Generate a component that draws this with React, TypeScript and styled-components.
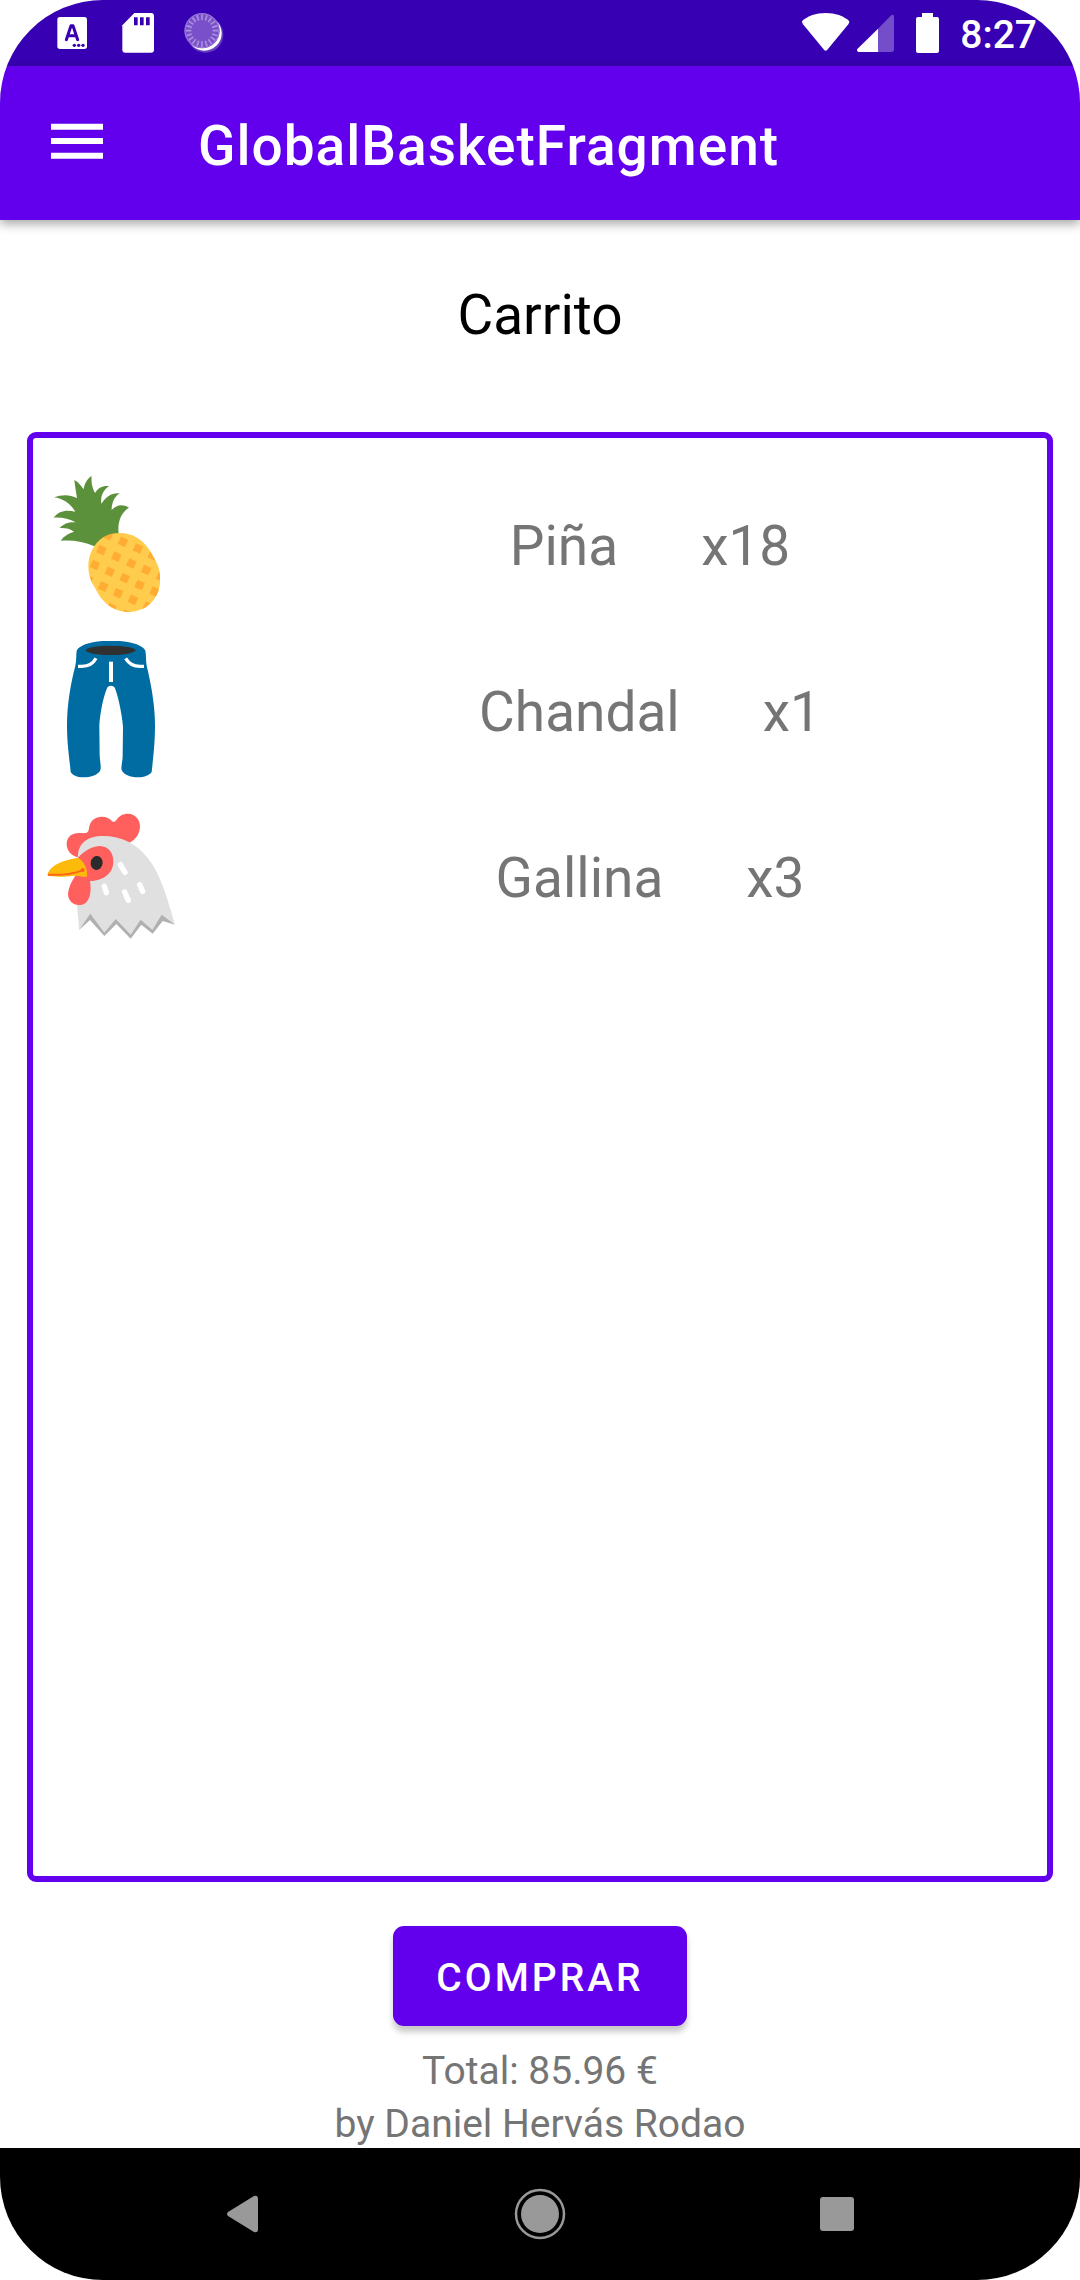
import React from 'react';
import styled, { createGlobalStyle } from 'styled-components';

const colors = {
  primary: '#6200ee',
  primaryDark: '#3700b3',
  surface: '#ffffff',
  text: '#000000',
  muted: '#757575',
  nav: '#999999',
};

const GlobalStyle = createGlobalStyle`
  *, *::before, *::after { box-sizing: border-box; }
  body {
    margin: 0;
    background: ${colors.surface};
    font-family: Roboto, 'Noto Sans', sans-serif;
  }
`;

const Screen = styled.div`
  display: flex;
  flex-direction: column;
  min-height: 100vh;
  border-radius: 103px;
  overflow: hidden;
  background: ${colors.surface};
`;

const StatusBar = styled.div`
  display: flex;
  align-items: center;
  justify-content: space-between;
  height: 66px;
  padding: 0 43px 0 52px;
  background: ${colors.primaryDark};
  color: #fff;
`;

const StatusGroup = styled.div<{ $gap: number }>`
  display: flex;
  align-items: center;
  gap: ${(p) => p.$gap}px;
`;

const StatusIcon = styled.svg<{ $width?: number }>`
  display: block;
  width: ${(p) => p.$width ?? 40}px;
  height: 40px;
`;

const Clock = styled.time`
  font-size: 39px;
  line-height: 48px;
  font-weight: 500;
  padding-top: 4px;
`;

const AppBar = styled.header`
  display: flex;
  align-items: center;
  gap: 88px;
  height: 154px;
  padding: 0 44px;
  background: ${colors.primary};
  color: #fff;
  box-shadow: 0 4px 10px rgba(0, 0, 0, 0.35);
`;

const IconButton = styled.button`
  display: flex;
  align-items: center;
  justify-content: center;
  padding: 0;
  border: 0;
  background: none;
  cursor: pointer;
`;

const MenuIcon = styled.svg`
  width: 66px;
  height: 66px;
`;

const Title = styled.h1`
  margin: 0;
  padding-top: 6px;
  font-size: 55px;
  line-height: 65px;
  font-weight: 500;
  letter-spacing: 1px;
`;

const Main = styled.main`
  flex: 1;
  display: flex;
  flex-direction: column;
  align-items: center;
  padding: 63px 27px 0;
`;

const Heading = styled.h2`
  margin: 0 0 84px;
  font-size: 55px;
  line-height: 65px;
  font-weight: 400;
  color: ${colors.text};
`;

const BasketList = styled.ul`
  flex: 1;
  align-self: stretch;
  margin: 0;
  padding: 22px 0;
  list-style: none;
  border: 6px solid ${colors.primary};
  border-radius: 9px;
`;

const BasketRow = styled.li`
  display: grid;
  grid-template-columns: 211px 1fr;
  align-items: center;
  height: 166px;
  padding-left: 9px;
`;

const Picture = styled.svg`
  display: block;
  width: 137px;
  height: 137px;
`;

const RowText = styled.div`
  display: flex;
  justify-content: center;
  gap: 83px;
  padding-top: 6px;
  font-size: 55px;
  line-height: 65px;
  color: ${colors.muted};
`;

const BuyButton = styled.button`
  margin: 44px 0 21px;
  height: 100px;
  padding: 4px 43px 0;
  border: 0;
  border-radius: 11px;
  background: ${colors.primary};
  color: #fff;
  font-family: inherit;
  font-size: 39px;
  line-height: 48px;
  font-weight: 500;
  letter-spacing: 3px;
  text-transform: uppercase;
  box-shadow: 0 6px 6px rgba(0, 0, 0, 0.22);
  cursor: pointer;
`;

const Footer = styled.footer`
  display: flex;
  flex-direction: column;
  align-items: center;
  gap: 5px;
  font-size: 39px;
  line-height: 48px;
  color: ${colors.muted};
`;

const NavBar = styled.nav`
  display: flex;
  align-items: center;
  justify-content: center;
  gap: 231px;
  height: 132px;
  background: #000;
`;

const NavIcon = styled.svg`
  width: 66px;
  height: 66px;
  fill: ${colors.nav};
`;

const Pineapple = () => (
  <Picture viewBox="66 165 411 411" role="img" aria-label="Piña">
    <defs>
      <clipPath id="fruit">
        <path d="M215 392C233 356 262 339 300 339C338 339 366 358 387 388L409 426C418 444 421 461 420 487C417 541 374 577 324 576C286 574 260 556 240 530L216 488C203 460 200 424 215 392Z" />
      </clipPath>
    </defs>
    <path
      fill="#5c913b"
      d="M223 379C194 365 160 360 122 362C132 348 145 340 162 335C150 326 136 323 119 324C131 311 146 306 167 307C149 297 128 292 101 293C117 272 139 269 166 275C150 250 130 236 102 232C128 222 151 224 171 234C168 214 165 198 163 180C175 186 184 198 191 208C194 188 202 176 215 168C213 189 217 205 225 219C234 203 248 196 267 198C249 211 241 228 244 251C259 229 277 217 299 220C281 232 275 251 275 270C290 254 308 251 327 263C302 279 292 307 296 342Z"
    />
    <g clipPath="url(#fruit)">
      <path fill="#ffcc4d" d="M190 320h250v270H190z" />
      <g fill="#ffac33" transform="translate(314 475) rotate(24)">
        {[-3, -2, -1, 0, 1, 2, 3].map((row) =>
          [-3, -2, -1, 0, 1, 2, 3].map((col) => (
            <rect key={`${row}${col}`} x={col * 49 - 12} y={row * 49 - 12} width="24" height="24" />
          )),
        )}
      </g>
    </g>
  </Picture>
);

const Trousers = () => (
  <Picture viewBox="66 63 411 411" role="img" aria-label="Chandal">
    <path
      fill="#006ca2"
      d="M170 92C178 74 220 62 273 62C326 62 368 74 376 92C379 105 377 121 380 137C393 190 405 255 405 315C405 370 400 408 395 456C390 465 373 472 354 472C330 472 310 463 305 450C302 441 308 425 308 407L309 320C305 275 294 230 286 207C282 195 264 193 260 207C250 232 241 275 238 315L239 405C240 427 245 443 240 453C231 466 211 472 191 472C171 472 156 465 152 456C147 405 141 370 141 315C141 255 152 190 166 137C170 121 168 105 170 92Z"
    />
    <ellipse cx="272" cy="91" rx="74" ry="14" fill="#303030" />
    <path
      d="M174 139H186C204 139 219 132 228 115M372 139H360C342 139 327 132 317 115"
      fill="none"
      stroke="#fff"
      strokeWidth="10"
    />
    <path d="M273 125V186" stroke="#fff" strokeWidth="12" />
  </Picture>
);

const Chicken = () => (
  <Picture viewBox="66 51 411 411" role="img" aria-label="Gallina">
    <path
      fill="#ff605e"
      d="M174 202C151 196 139 179 140 159C142 139 158 128 179 129C197 130 205 131 207 114C210 92 225 80 246 80C260 80 269 86 275 92C280 97 284 97 289 90C298 77 309 71 324 71C345 72 359 87 360 107C360 130 348 148 327 159Z"
    />
    <path
      fill="#e0e0e0"
      d="M174 201C173 158 206 138 248 138C306 138 350 161 385 206C421 251 441 321 465 404L426 378L398 425L362 394L332 440L288 391L253 433L211 376L177 419C176 390 171 365 171 330Z"
    />
    <path
      fill="#b0b0b0"
      d="M177 420L211 371L253 428L287 387L332 434L362 389L397 420L425 374L465 404L428 393L398 431L364 404L332 446L289 402L253 438L210 390Z"
    />
    <path
      fill="#ff605e"
      d="M174 203C194 181 220 168 240 168C265 169 280 187 280 215C280 252 246 273 210 273C213 293 213 312 206 326C200 339 190 345 177 345C157 345 144 330 144 312C145 293 154 275 166 257Z"
    />
    <path
      fill="#fcbb0b"
      d="M82 256C88 225 133 209 174 203C193 215 203 235 201 260C192 262 178 257 161 257C130 261 103 262 82 256Z"
    />
    <path d="M84 254C126 256 160 252 187 241" fill="none" stroke="#ff6417" strokeWidth="6" />
    <circle cx="188" cy="240" r="6" fill="#ff6417" />
    <ellipse cx="230" cy="219" rx="18" ry="21" fill="#2b2b2b" transform="rotate(8 230 219)" />
    <path
      d="M301 224L315 247M253 289L259 308M314 306L325 331M359 284L368 304"
      stroke="#fff"
      strokeWidth="16"
      strokeLinecap="round"
    />
  </Picture>
);

const spokes = Array.from({ length: 20 }, (_, i) => i * 18);

const items = [
  { name: 'Piña', amount: 18, Art: Pineapple },
  { name: 'Chandal', amount: 1, Art: Trousers },
  { name: 'Gallina', amount: 3, Art: Chicken },
];

export default function App() {
  return (
    <>
      <GlobalStyle />
      <Screen>
        <StatusBar>
          <StatusGroup $gap={26}>
            <StatusIcon viewBox="156 39 120 120" aria-hidden="true">
              <rect x="172" y="51" width="89" height="96" rx="8" fill="#fff" />
              <path
                d="M199 119L213 77H219L233 119M206 107H227"
                fill="none"
                stroke={colors.primaryDark}
                strokeWidth="9"
                strokeLinecap="round"
                strokeLinejoin="round"
              />
              <g fill={colors.primaryDark}>
                <circle cx="223" cy="136" r="5" />
                <circle cx="236" cy="136" r="5" />
                <circle cx="249" cy="136" r="5" />
              </g>
            </StatusIcon>
            <StatusIcon viewBox="354 39 120 120" aria-hidden="true">
              <path
                fill="#fff"
                d="M403 39H453Q462 39 462 49V149Q462 158 453 158H376Q367 158 367 149V76Z"
              />
              <path
                fill={colors.primaryDark}
                d="M402 52h11v24h-11zM420 52h11v24h-11zM438 52h11v24h-11z"
              />
            </StatusIcon>
            <StatusIcon viewBox="552 39 120 120" aria-hidden="true">
              <circle cx="616" cy="104" r="54" fill="#8a68cf" opacity="0.6" />
              <circle cx="613" cy="100" r="52" fill="#fff" />
              <circle cx="606" cy="92" r="53" fill="#7a50ca" />
              <g stroke="#a98fdd" strokeWidth="5">
                {spokes.map((angle) => (
                  <path key={angle} d="M606 43V60" transform={`rotate(${angle} 606 92)`} />
                ))}
              </g>
              <circle cx="606" cy="92" r="51" fill="none" stroke="#9b7cd8" strokeWidth="3" />
            </StatusIcon>
          </StatusGroup>
          <StatusGroup $gap={20}>
            <StatusGroup $gap={6}>
              <StatusIcon $width={48} viewBox="120 39 144 120" aria-hidden="true">
                <path
                  fill="#fff"
                  d="M120 64C137 47 162 39 191 39C220 39 245 47 262 64Q262 69 259 73L196 149Q191 155 186 149L123 73Q120 69 120 64Z"
                />
              </StatusIcon>
              <StatusIcon viewBox="282 39 120 120" aria-hidden="true">
                <path
                  fill="#fff"
                  opacity="0.3"
                  d="M348 86L386 47Q396 40 396 51V148Q396 156 388 156H348Z"
                />
                <path fill="#fff" d="M348 86V156H290Q283 154 286 147Z" />
              </StatusIcon>
            </StatusGroup>
            <StatusIcon $width={24} viewBox="468 39 72 120" aria-hidden="true">
              <path
                fill="#fff"
                d="M486 39H519V51H531Q537 51 537 57V153Q537 159 531 159H474Q468 159 468 153V57Q468 51 474 51H486Z"
              />
            </StatusIcon>
            <Clock>8:27</Clock>
          </StatusGroup>
        </StatusBar>

        <AppBar>
          <IconButton type="button" aria-label="Abrir menú">
            <MenuIcon viewBox="132 330 198 198" aria-hidden="true">
              <path fill="#fff" d="M153 371h156v18H153zM153 414h156v18H153zM153 458h156v18H153z" />
            </MenuIcon>
          </IconButton>
          <Title>GlobalBasketFragment</Title>
        </AppBar>

        <Main>
          <Heading>Carrito</Heading>
          <BasketList>
            {items.map(({ name, amount, Art }) => (
              <BasketRow key={name}>
                <Art />
                <RowText>
                  <span>{name}</span>
                  <span>{`x${amount}`}</span>
                </RowText>
              </BasketRow>
            ))}
          </BasketList>
          <BuyButton type="button">Comprar</BuyButton>
          <Footer>
            <span>Total: 85.96 €</span>
            <span>by Daniel Hervás Rodao</span>
          </Footer>
        </Main>

        <NavBar>
          <IconButton type="button" aria-label="Atrás">
            <NavIcon viewBox="0 0 66 66" aria-hidden="true">
              <path d="M18 31L44 15Q48 14 48 18V48Q48 52 44 51L18 35Q16 33 18 31Z" />
            </NavIcon>
          </IconButton>
          <IconButton type="button" aria-label="Inicio">
            <NavIcon viewBox="0 0 66 66" aria-hidden="true">
              <circle cx="33" cy="33" r="19" />
              <circle cx="33" cy="33" r="24" fill="none" stroke={colors.nav} strokeWidth="2.5" />
            </NavIcon>
          </IconButton>
          <IconButton type="button" aria-label="Recientes">
            <NavIcon viewBox="0 0 66 66" aria-hidden="true">
              <rect x="16" y="16" width="34" height="34" rx="3" />
            </NavIcon>
          </IconButton>
        </NavBar>
      </Screen>
    </>
  );
}
